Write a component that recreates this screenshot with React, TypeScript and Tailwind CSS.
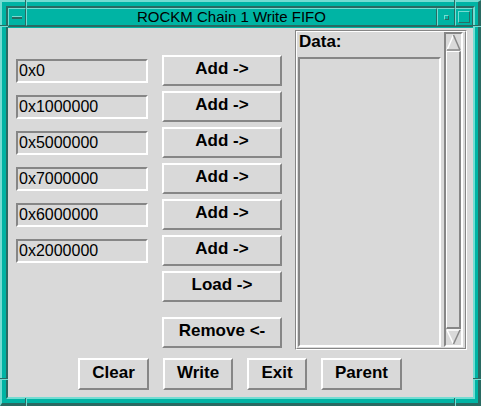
import React from "react";

const raised =
  "border-2 border-t-white border-l-white border-b-[#868686] border-r-[#868686]";
const sunken =
  "border-2 border-t-[#868686] border-l-[#868686] border-b-white border-r-white";
const tRaised =
  "border border-t-[#74dcd2] border-l-[#74dcd2] border-b-[#2a6a62] border-r-[#2a6a62]";

function Btn({ label, className }: { label: string; className: string }) {
  return (
    <div
      className={`${raised} bg-[#d9d9d9] flex items-center justify-center font-bold text-[17px] leading-[20px] text-black pb-[3px] whitespace-pre ${className}`}
    >
      {label}
    </div>
  );
}

const values = ["0x0", "0x1000000", "0x5000000", "0x7000000", "0x6000000", "0x2000000"];

export default function App() {
  return (
    <div
      className="relative w-[481px] h-[406px]"
      style={{ fontFamily: '"Liberation Sans", Arial, sans-serif' }}
    >
      <div className="w-[481px] h-[406px] bg-[#00b4a4] border-t-2 border-l-2 border-t-[#74dcd2] border-l-[#74dcd2] border-b-[3px] border-r-[3px] border-b-[#2a6a62] border-r-[#2a6a62] pt-[4px] pl-[4px] pr-[3px] pb-[4px]">
        <div className="w-full h-full border-2 border-t-[#2a6a62] border-l-[#2a6a62] border-b-[#74dcd2] border-r-[#74dcd2] flex flex-col">
          {/* title bar */}
          <div className="flex h-[18px]">
            <div className={`${tRaised} w-[18px] h-[18px] flex items-center justify-center`}>
              <div className="w-[10px] h-[3px] bg-[#2a6a62] border-t border-t-[#74dcd2]" />
            </div>
            <div
              className={`${tRaised} flex-1 h-[18px] flex items-center justify-center text-[15px] leading-[16px] text-black`}
            >
              ROCKM Chain 1 Write FIFO
            </div>
            <div className={`${tRaised} w-[18px] h-[18px] flex items-center justify-center`}>
              <div className="w-[5px] h-[5px] border border-t-[#74dcd2] border-l-[#74dcd2] border-b-[#2a6a62] border-r-[#2a6a62] bg-[#00b4a4]" />
            </div>
            <div className={`${tRaised} w-[18px] h-[18px] flex items-center justify-center`}>
              <div className="w-[12px] h-[12px] border border-t-[#74dcd2] border-l-[#74dcd2] border-b-[#2a6a62] border-r-[#2a6a62] bg-[#00b4a4]" />
            </div>
          </div>
          <div className="h-[2px] border-t border-t-[#2a6a62]" />
          {/* client */}
          <div className="bg-[#d9d9d9] w-[465px] h-[369px] flex flex-col">
            <div className="flex h-[322px] pt-[2px]">
              <div className="w-[287px] flex flex-col pt-[25px]">
                {values.map((v) => (
                  <div key={v} className="flex items-center h-[31px] mb-[5px]">
                    <div
                      className={`${sunken} ml-[8px] w-[132px] h-[24px] pl-[1px] text-[16px] leading-[20px] text-black`}
                    >
                      {v}
                    </div>
                    <Btn className="ml-[14px] w-[120px] h-[31px]" label="Add ->" />
                  </div>
                ))}
                <div className="flex h-[31px]">
                  <Btn className="ml-[154px] w-[120px] h-[31px]" label="Load ->" />
                </div>
                <div className="flex h-[31px] mt-[15px]">
                  <Btn className="ml-[154px] w-[120px] h-[31px]" label="Remove <-" />
                </div>
              </div>
              {/* Data frame */}
              <div className="w-[172px] h-[320px] border border-t-[#868686] border-l-[#868686] border-b-white border-r-white">
                <div className="w-full h-full border border-t-white border-l-white border-b-[#868686] border-r-[#868686] flex pb-[1px]">
                  <div className="ml-[1px] w-[143px] flex flex-col">
                    <div className="h-[25px] pl-[1px] font-bold text-[17px] leading-[20px] text-black">
                      Data:
                    </div>
                    <div className={`${sunken} flex-1 bg-[#d9d9d9]`} />
                  </div>
                  <div className="ml-[3px] w-[19px] border-2 border-t-[#868686] border-l-[#868686] border-b-white border-r-white flex flex-col">
                    <svg width="15" height="17" viewBox="0 0 15 17" className="block">
                      <polygon points="7.5,1 1,16 14,16" fill="#d9d9d9" />
                      <line x1="7.5" y1="1" x2="1" y2="16" stroke="#ffffff" strokeWidth="1.5" />
                      <line x1="7.5" y1="1" x2="14" y2="16" stroke="#868686" strokeWidth="1.5" />
                      <line x1="1" y1="16" x2="14" y2="16" stroke="#868686" strokeWidth="1.5" />
                    </svg>
                    <div className="flex-1 border border-t-white border-l-white border-b-2 border-r-2 border-b-[#868686] border-r-[#868686]" />
                    <svg width="15" height="16" viewBox="0 0 15 16" className="block">
                      <polygon points="1,1 14,1 7.5,15" fill="#d9d9d9" />
                      <line x1="1" y1="1" x2="14" y2="1" stroke="#ffffff" strokeWidth="1.5" />
                      <line x1="1" y1="1" x2="7.5" y2="15" stroke="#ffffff" strokeWidth="1.5" />
                      <line x1="14" y1="1" x2="7.5" y2="15" stroke="#868686" strokeWidth="1.5" />
                    </svg>
                  </div>
                </div>
              </div>
            </div>
            <div className="flex mt-[8px] ml-[70px] gap-[14px]">
              <Btn className="w-[71px] h-[32px]" label="Clear" />
              <Btn className="w-[70px] h-[32px]" label="Write" />
              <Btn className="w-[60px] h-[32px]" label="Exit" />
              <Btn className="w-[81px] h-[32px]" label="Parent" />
            </div>
          </div>
        </div>
      </div>
      {/* resize corner markers */}
      <div className="absolute left-[25px] top-0 w-[1px] h-[8px] bg-[#2a6a62]" />
      <div className="absolute left-[26px] top-0 w-[1px] h-[8px] bg-[#74dcd2]" />
      <div className="absolute left-[454px] top-0 w-[1px] h-[8px] bg-[#2a6a62]" />
      <div className="absolute left-[455px] top-0 w-[1px] h-[8px] bg-[#74dcd2]" />
      <div className="absolute left-[25px] top-[398px] w-[1px] h-[8px] bg-[#2a6a62]" />
      <div className="absolute left-[26px] top-[398px] w-[1px] h-[8px] bg-[#74dcd2]" />
      <div className="absolute left-[454px] top-[398px] w-[1px] h-[8px] bg-[#2a6a62]" />
      <div className="absolute left-[455px] top-[398px] w-[1px] h-[8px] bg-[#74dcd2]" />
      <div className="absolute left-0 top-[25px] w-[8px] h-[1px] bg-[#2a6a62]" />
      <div className="absolute left-0 top-[26px] w-[8px] h-[1px] bg-[#74dcd2]" />
      <div className="absolute left-[473px] top-[25px] w-[8px] h-[1px] bg-[#2a6a62]" />
      <div className="absolute left-[473px] top-[26px] w-[8px] h-[1px] bg-[#74dcd2]" />
      <div className="absolute left-0 top-[378px] w-[8px] h-[1px] bg-[#2a6a62]" />
      <div className="absolute left-0 top-[379px] w-[8px] h-[1px] bg-[#74dcd2]" />
      <div className="absolute left-[473px] top-[378px] w-[8px] h-[1px] bg-[#2a6a62]" />
      <div className="absolute left-[473px] top-[379px] w-[8px] h-[1px] bg-[#74dcd2]" />
    </div>
  );
}
